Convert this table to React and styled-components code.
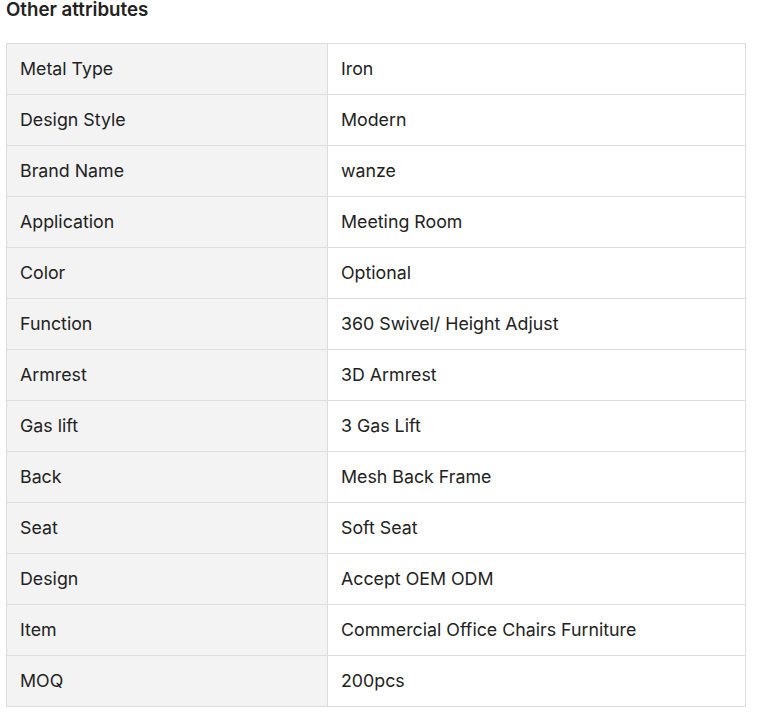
import React from "react";
import styled, { createGlobalStyle } from "styled-components";

const GlobalStyle = createGlobalStyle`
  body {
    margin: 0;
    background: #fff;
    font-family: Inter, "Noto Sans", sans-serif;
    color: #222;
  }
`;

const Wrapper = styled.div`
  padding: 0 23px 0 6px;
`;

const Title = styled.h3`
  margin: 0 0 23px 0;
  font-size: 18.7px;
  line-height: 20px;
  font-weight: 600;
  color: #222;
`;

const Table = styled.table`
  width: 740px;
  border-collapse: collapse;
  table-layout: fixed;
`;

const Cell = styled.td`
  height: 51px;
  padding: 0 13px 2px;
  border: 1px solid #ddd;
  font-size: 17.8px;
  color: #222;
  background: ${(p) => (p.$label ? "#f3f3f3" : "#fff")};
  width: ${(p) => (p.$label ? "321px" : "auto")};
  box-sizing: border-box;
`;

const rows = [
  ["Metal Type", "Iron"],
  ["Design Style", "Modern"],
  ["Brand Name", "wanze"],
  ["Application", "Meeting Room"],
  ["Color", "Optional"],
  ["Function", "360 Swivel/ Height Adjust"],
  ["Armrest", "3D Armrest"],
  ["Gas lift", "3 Gas Lift"],
  ["Back", "Mesh Back Frame"],
  ["Seat", "Soft Seat"],
  ["Design", "Accept OEM ODM"],
  ["Item", "Commercial Office Chairs Furniture"],
  ["MOQ", "200pcs"],
];

export default function App() {
  return (
    <>
      <GlobalStyle />
      <Wrapper>
        <Title>Other attributes</Title>
        <Table>
          <tbody>
            {rows.map(([k, v]) => (
              <tr key={k}>
                <Cell $label>{k}</Cell>
                <Cell>{v}</Cell>
              </tr>
            ))}
          </tbody>
        </Table>
      </Wrapper>
    </>
  );
}
